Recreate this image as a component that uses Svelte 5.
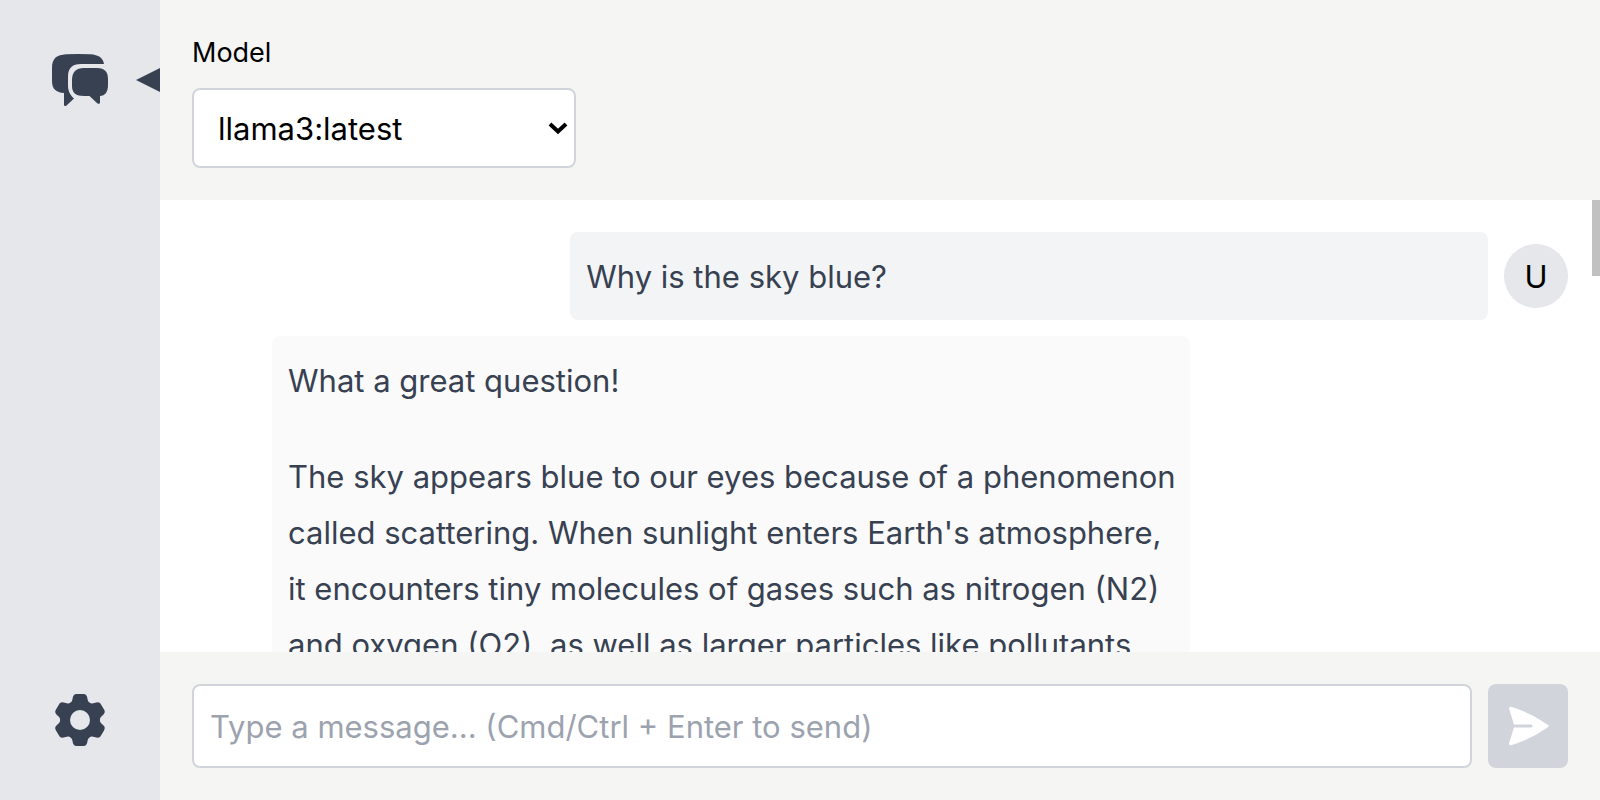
<script>
  let model = $state('llama3:latest');
  let draft = $state('');

  const messages = [
    { role: 'user', paragraphs: ['Why is the sky blue?'] },
    {
      role: 'assistant',
      paragraphs: [
        'What a great question!',
        "The sky appears blue to our eyes because of a phenomenon called scattering. When sunlight enters Earth's atmosphere, it encounters tiny molecules of gases such as nitrogen (N2) and oxygen (O2), as well as larger particles like pollutants"
      ]
    }
  ];
  const teeth = [0, 60, 120, 180, 240, 300];
</script>

<div class="app">
  <nav class="sidebar">
    <a class="nav-link active" href="#chat" aria-label="Chat">
      <svg width="64" height="64" viewBox="0 0 64 64" fill="currentColor">
        <path d="M4 20C4 10 9 7 18 6.300Q30 5.700 42 6.300C51 7 55 10 56 16H33C24 16 20 20 20 29V37C20 43 22 47 26 50.500L18.500 57.500Q16 59 16 56.500V45C8 44.500 4 41 4 33Z" />
        <path d="M24 32C24 24 28 20 36 20H49C57 20 60 24 60 31V37C60 44 57 48 52 48V54.500Q52 56.500 49.500 55.500L41.500 48H36C28 48 24 45 24 38Z" />
      </svg>
    </a>
    <a class="nav-link" href="#settings" aria-label="Settings">
      <svg width="64" height="64" viewBox="-32 -32 64 64" fill="currentColor">
        <circle r="18" />
        {#each teeth as angle}
          <path transform={`rotate(${angle})`} d="M-11 -16.500C-8.500 -17.500 -8 -19 -7.500 -21C-7 -25 -5.500 -26 -3 -26H3C5.500 -26 7 -25 7.500 -21C8 -19 8.500 -17.500 11 -16.500L0 0Z" />
        {/each}
        <circle class="hub" r="10" />
      </svg>
    </a>
  </nav>

  <div class="content">
    <header>
      <label for="model">Model</label>
      <div class="select-box">
        <select id="model" bind:value={model}>
          <option value="llama3:latest">llama3:latest</option>
        </select>
        <svg class="chevron" width="20" height="12" viewBox="0 0 20 12" fill="none" stroke="#000" stroke-width="4">
          <path d="M2 2L10 9.500L18 2" />
        </svg>
      </div>
    </header>

    <main>
      <div class="messages">
        {#each messages as message}
          <div class="message {message.role}">
            <div class="bubble">
              {#each message.paragraphs as paragraph}
                <p>{paragraph}</p>
              {/each}
            </div>
            {#if message.role === 'user'}
              <span class="avatar">U</span>
            {/if}
          </div>
        {/each}
      </div>
      <div class="thumb"></div>
    </main>

    <form onsubmit={(e) => e.preventDefault()}>
      <input type="text" aria-label="Message" placeholder="Type a message... (Cmd/Ctrl + Enter to send)" bind:value={draft} />
      <button type="submit" aria-label="Send" disabled={!draft}>
        <svg width="48" height="48" viewBox="0 0 24 24" fill="#fff">
          <path d="M3.478 2.404a.75.75 0 0 0-.926.941l2.432 7.905H13.500a.75.75 0 0 1 0 1.500H4.984l-2.432 7.905a.75.75 0 0 0 .926.94 60.519 60.519 0 0 0 18.445-8.986.75.75 0 0 0 0-1.218A60.517 60.517 0 0 0 3.478 2.404Z" />
        </svg>
      </button>
    </form>
  </div>
</div>

<style>
  :global(body) {
    margin: 0;
  }
  .app,
  .app * {
    box-sizing: border-box;
  }
  .app {
    display: flex;
    height: 100vh;
    font-family: Inter, 'Liberation Sans', sans-serif;
    font-size: 31px;
    line-height: 56px;
    color: #000;
    background: #fff;
  }
  svg {
    display: block;
  }
  .sidebar {
    flex: 0 0 160px;
    display: flex;
    flex-direction: column;
    justify-content: space-between;
    background: #e5e7eb;
  }
  .nav-link {
    position: relative;
    display: flex;
    align-items: center;
    justify-content: center;
    height: 160px;
    color: #374151;
  }
  .active::after {
    content: '';
    position: absolute;
    right: 0;
    top: 68px;
    border: solid transparent;
    border-width: 12px 24px 12px 0;
    border-right-color: #374151;
  }
  .hub {
    fill: #e5e7eb;
  }
  .content {
    flex: 1;
    min-width: 0;
    display: flex;
    flex-direction: column;
  }
  header {
    padding: 32px;
    background: #f5f5f4;
  }
  label {
    display: block;
    margin-bottom: 14px;
    font-size: 27px;
    line-height: 42px;
  }
  .select-box {
    position: relative;
    width: 384px;
  }
  select {
    display: block;
    width: 100%;
    height: 80px;
    padding: 2px 48px 0 24px;
    appearance: none;
    border: 2px solid #d1d5db;
    border-radius: 8px;
    background: #fff;
    font: inherit;
    color: #000;
  }
  .chevron {
    position: absolute;
    right: 8px;
    top: 34px;
    pointer-events: none;
  }
  main {
    position: relative;
    flex: 1;
    min-height: 0;
  }
  .messages {
    display: flex;
    flex-direction: column;
    gap: 16px;
    height: 100%;
    padding: 32px;
    overflow-y: auto;
    scrollbar-width: none;
  }
  .thumb {
    position: absolute;
    right: 0;
    top: 0;
    width: 8px;
    height: 76px;
    background: #c1c1c1;
  }
  .message {
    flex: none;
    display: flex;
    align-items: center;
    gap: 16px;
  }
  .user {
    justify-content: flex-end;
  }
  .bubble {
    width: 66.7%;
    padding: 17px 8px 15px 16px;
    border-radius: 8px;
    background: #fafafa;
    color: #374151;
  }
  .user .bubble {
    background: #f3f4f6;
  }
  .assistant .bubble {
    margin-left: 80px;
  }
  p {
    margin: 0;
  }
  p + p {
    margin-top: 40px;
  }
  .avatar {
    flex: none;
    display: flex;
    align-items: center;
    justify-content: center;
    width: 64px;
    height: 64px;
    padding-top: 2px;
    border-radius: 50%;
    background: #e5e7eb;
  }
  form {
    display: flex;
    gap: 16px;
    padding: 32px;
    background: #f5f5f4;
  }
  input {
    flex: 1;
    min-width: 0;
    height: 84px;
    padding: 0 16px;
    border: 2px solid #d1d5db;
    border-radius: 8px;
    background: #fff;
    font: inherit;
    color: #000;
  }
  input::placeholder {
    color: #9ca3af;
    opacity: 1;
  }
  button {
    flex: none;
    display: flex;
    align-items: center;
    justify-content: center;
    width: 80px;
    padding: 0;
    border: 0;
    border-radius: 8px;
    background: #d1d5db;
  }
</style>
